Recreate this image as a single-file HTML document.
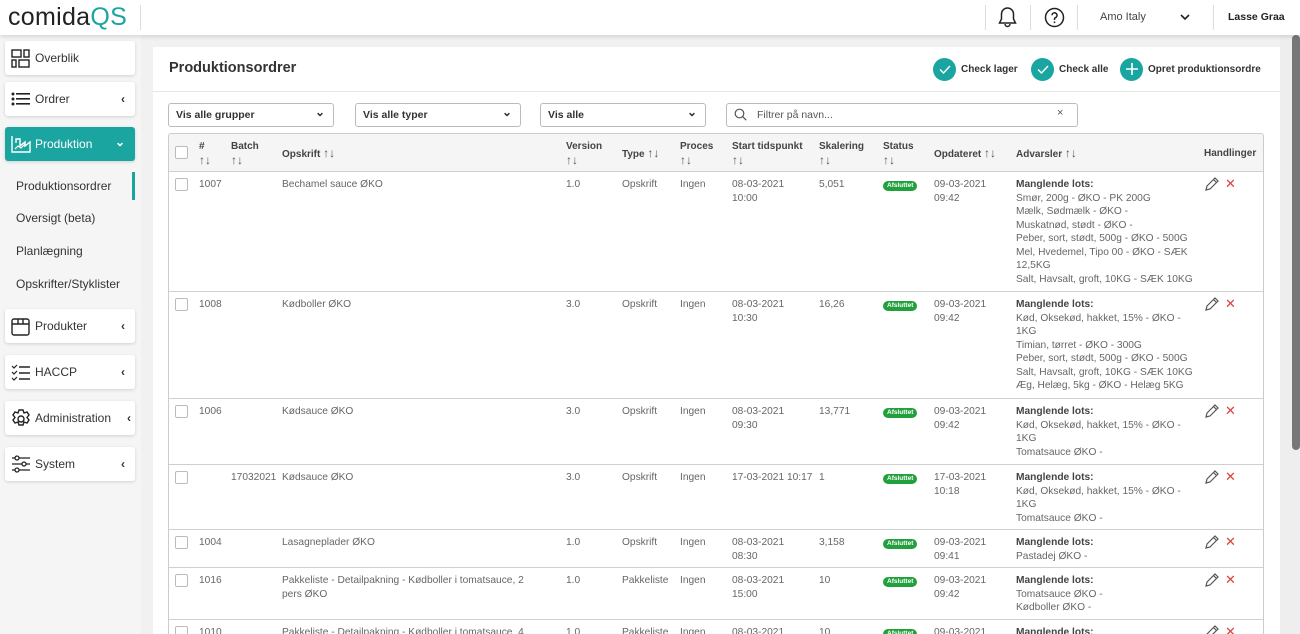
<!DOCTYPE html>
<html style="overflow:hidden;width:1300px;height:634px"><head><meta charset="utf-8"><style>
*{box-sizing:border-box;margin:0;padding:0}
body{width:1300px;height:634px;overflow:hidden;font-family:"Liberation Sans",Arial,sans-serif;background:#f1f1f1;position:relative;color:#333}
.abs{position:absolute}
#hdr{left:0;top:0;width:1300px;height:35px;background:#fff;box-shadow:0 2px 4px rgba(0,0,0,.12);z-index:5}
.logo{left:8px;top:3px;font-size:25px;color:#222;letter-spacing:.3px}
.logo span{color:#1aa5a0}
.sep{top:5px;width:1px;height:25px;background:#ddd}
#side{left:0;top:35px;width:141px;height:599px;background:#f5f5f5}
.nav{position:absolute;left:5px;width:130px;height:34px;background:#fff;border-radius:3px;box-shadow:0 1px 3px rgba(0,0,0,.15);font-size:12px;color:#333}
.nav .ic{position:absolute;left:6px;top:8px}
.nav .t{position:absolute;left:30px;top:10px}
.nav .ch{position:absolute;right:10px;top:10px;font-size:12px;font-weight:bold;line-height:14px}
.sub{position:absolute;left:16px;font-size:12px;color:#333}
#card{left:153px;top:47px;width:1127px;height:587px;background:#fff;overflow:hidden}
.title{left:16px;top:13px;font-size:14.5px;font-weight:bold;color:#333}
.btn{top:10px;height:24px;font-size:10px;font-weight:bold;color:#333;display:flex;align-items:center;gap:5px}
.circ{width:23px;height:23px;border-radius:50%;background:#1aa5a0;display:flex;align-items:center;justify-content:center}
.sel{top:56px;height:24px;border:1px solid #bbb;border-radius:3px;font-size:10.5px;font-weight:bold;padding:5px 7px;color:#333}
.sel:after{content:"⌄";position:absolute;right:8px;top:1px;font-size:12px}
#tbl{left:168px;top:133px;width:1096px;height:510px;border:1px solid #ccc;border-radius:3px;overflow:hidden}
.row{position:absolute;left:0;width:1094px;border-bottom:1px solid #cfcfcf;font-size:10.2px;color:#666;line-height:13.5px}
.row div{position:absolute}
.hd{background:#f5f5f5;font-weight:bold;color:#444;font-size:10px}
.ar{font-size:12px;font-weight:normal;color:#555}
.cb{width:13px;height:13px;border:1px solid #bbb;border-radius:2px;background:#fff}
.badge{background:#22a03c;color:#fff;font-size:6.5px;font-weight:bold;border-radius:6px;padding:0 4px;line-height:10px}
.adv b{color:#444}
.x{color:#d9413c;font-size:13px}
#sb{left:1280px;top:35px;width:20px;height:599px;background:#eee}
#thumb{left:1292px;top:35px;width:8px;height:415px;background:#777;border-radius:4px}
</style></head><body>
<div id="hdr" class="abs">
<div class="abs logo">comida<span>QS</span></div>
<div class="abs sep" style="left:140px"></div>
<div class="abs sep" style="left:985px"></div>
<div class="abs sep" style="left:1030px"></div>
<div class="abs sep" style="left:1077px"></div>
<div class="abs sep" style="left:1213px"></div>
<svg class="abs" style="left:998px;top:6px" width="19" height="22" viewBox="0 0 19 22"><path d="M9.5 2a6 6 0 0 0-6 6v5l-2 4h16l-2-4V8a6 6 0 0 0-6-6z M7 18a2.5 2.5 0 0 0 5 0" fill="none" stroke="#222" stroke-width="1.5"/></svg>
<svg class="abs" style="left:1044px;top:7px" width="21" height="21" viewBox="0 0 21 21"><circle cx="10.5" cy="10.5" r="9" fill="none" stroke="#222" stroke-width="1.5"/><path d="M8 8.3a2.5 2.5 0 1 1 3.5 2.3c-.8.4-1 .9-1 1.7v.7" fill="none" stroke="#222" stroke-width="1.5"/><circle cx="10.5" cy="15.3" r=".9" fill="#222"/></svg>
<div class="abs" style="left:1100px;top:11px;font-size:11px;color:#444">Amo Italy</div>
<svg class="abs" style="left:1180px;top:14px" width="10" height="7"><path d="M1 1l4 4 4-4" fill="none" stroke="#222" stroke-width="1.6"/></svg>
<div class="abs" style="left:1228px;top:11px;font-size:10.5px;font-weight:bold;color:#222">Lasse Graa</div>
</div>

<div id="side" class="abs">
<div class="nav" style="top:6px"><svg class="ic" width="20" height="19"><rect x="1" y="1" width="9" height="7" fill="none" stroke="#222" stroke-width="1.4"/><rect x="13" y="1" width="5" height="7" fill="none" stroke="#222" stroke-width="1.4"/><rect x="1" y="11" width="4" height="7" fill="none" stroke="#222" stroke-width="1.4"/><rect x="8" y="11" width="10" height="7" fill="none" stroke="#222" stroke-width="1.4"/></svg><span class="t">Overblik</span></div>
<div class="nav" style="top:47px"><svg class="ic" width="20" height="18"><g fill="#222"><circle cx="2" cy="4" r="1.5"/><circle cx="2" cy="9" r="1.5"/><circle cx="2" cy="14" r="1.5"/><rect x="5" y="3" width="14" height="1.6"/><rect x="5" y="8" width="14" height="1.6"/><rect x="5" y="13" width="14" height="1.6"/></g></svg><span class="t">Ordrer</span><span class="ch">‹</span></div>
<div class="nav" style="top:92px;background:#1aa5a0;color:#fff"><svg class="ic" width="20" height="18"><path d="M1 1v16h18V7l-5 4V7l-5 4V4H5v4" fill="none" stroke="#fff" stroke-width="1.4"/><path d="M4 14l3-3 3 2 4-4" fill="none" stroke="#fff" stroke-width="1.2"/></svg><span class="t">Produktion</span><span class="ch" style="top:8px">⌄</span></div>
<div class="sub" style="top:144px">Produktionsordrer</div>
<div class="abs" style="left:132px;top:137px;width:3px;height:28px;background:#1aa5a0"></div>
<div class="sub" style="top:176px">Oversigt (beta)</div>
<div class="sub" style="top:209px">Planlægning</div>
<div class="sub" style="top:242px">Opskrifter/Styklister</div>
<div class="nav" style="top:274px"><svg class="ic" width="20" height="19"><rect x="1" y="2" width="17" height="16" rx="2" fill="none" stroke="#222" stroke-width="1.4"/><path d="M1 7h17M7 2v5h5V2" fill="none" stroke="#222" stroke-width="1.4"/></svg><span class="t">Produkter</span><span class="ch">‹</span></div>
<div class="nav" style="top:320px"><svg class="ic" width="20" height="18"><path d="M1 3l2 2 3-3M1 9l2 2 3-3M1 15l2 2 3-3" fill="none" stroke="#222" stroke-width="1.2"/><path d="M8 4h11M8 10h11M8 16h11" stroke="#222" stroke-width="1.4"/></svg><span class="t">HACCP</span><span class="ch">‹</span></div>
<div class="nav" style="top:366px"><svg class="ic" width="20" height="20"><circle cx="10" cy="10" r="3" fill="none" stroke="#222" stroke-width="1.4"/><path d="M8 1h4l1 3 3-1 2 3-2 2.5 2 2.5-2 3-3-1-1 3H8l-1-3-3 1-2-3 2-2.5L2 6l2-3 3 1z" fill="none" stroke="#222" stroke-width="1.4"/></svg><span class="t">Administration</span><span class="ch" style="right:4px">‹</span></div>
<div class="nav" style="top:412px"><svg class="ic" width="20" height="19"><path d="M1 3h18M1 9h18M1 15h18" stroke="#222" stroke-width="1.3"/><circle cx="6" cy="3" r="2" fill="#fff" stroke="#222" stroke-width="1.3"/><circle cx="13" cy="9" r="2" fill="#fff" stroke="#222" stroke-width="1.3"/><circle cx="6" cy="15" r="2" fill="#fff" stroke="#222" stroke-width="1.3"/></svg><span class="t">System</span><span class="ch">‹</span></div>
</div>

<div id="card" class="abs">
<div class="abs title">Produktionsordrer</div>
<div class="abs btn" style="left:780px"><div class="circ"><svg width="12" height="9"><path d="M1 4.5l3.5 3.5L11 1" fill="none" stroke="#fff" stroke-width="1.4"/></svg></div>Check lager</div>
<div class="abs btn" style="left:878px"><div class="circ"><svg width="12" height="9"><path d="M1 4.5l3.5 3.5L11 1" fill="none" stroke="#fff" stroke-width="1.4"/></svg></div>Check alle</div>
<div class="abs btn" style="left:967px"><div class="circ"><svg width="12" height="12"><path d="M6 0v12M0 6h12" stroke="#fff" stroke-width="1.6"/></svg></div>Opret produktionsordre</div>
<div class="abs" style="left:0;top:44px;width:1127px;height:1px;background:#e6e6e6"></div>
<div class="abs sel" style="left:15px;width:166px">Vis alle grupper</div>
<div class="abs sel" style="left:202px;width:166px">Vis alle typer</div>
<div class="abs sel" style="left:387px;width:166px">Vis alle</div>
<div class="abs sel" style="left:573px;width:352px;font-weight:normal;color:#555;padding-left:30px">Filtrer på navn...</div>
<svg class="abs" style="left:581px;top:61px" width="13" height="13"><circle cx="5.5" cy="5.5" r="4.3" fill="none" stroke="#555" stroke-width="1.2"/><path d="M8.7 8.7l3.5 3.5" stroke="#555" stroke-width="1.2"/></svg>
<div class="abs" style="left:904px;top:60px;width:12px;height:14px;font-size:11px;color:#555;background:#fff">×</div>
</div>

<div id="tbl" class="abs">
<div class="row hd" style="top:0;height:38px">
<div class="cb" style="left:6px;top:12px"></div>
<div style="left:30px;top:6px">#<br><span class="ar">↑↓</span></div>
<div style="left:62px;top:6px">Batch<br><span class="ar">↑↓</span></div>
<div style="left:113px;top:13px">Opskrift <span class="ar">↑↓</span></div>
<div style="left:397px;top:6px">Version<br><span class="ar">↑↓</span></div>
<div style="left:453px;top:13px">Type <span class="ar">↑↓</span></div>
<div style="left:511px;top:6px">Proces<br><span class="ar">↑↓</span></div>
<div style="left:563px;top:6px">Start tidspunkt<br><span class="ar">↑↓</span></div>
<div style="left:650px;top:6px">Skalering<br><span class="ar">↑↓</span></div>
<div style="left:714px;top:6px">Status<br><span class="ar">↑↓</span></div>
<div style="left:765px;top:13px">Opdateret <span class="ar">↑↓</span></div>
<div style="left:847px;top:13px">Advarsler <span class="ar">↑↓</span></div>
<div style="left:1035px;top:13px">Handlinger</div>
</div>

<div class="row" style="top:38px;height:120px">
<div class="cb" style="left:6px;top:6px"></div><div style="left:30px;top:6px">1007</div><div style="left:113px;top:6px">Bechamel sauce ØKO</div><div style="left:397px;top:6px">1.0</div><div style="left:453px;top:6px">Opskrift</div><div style="left:511px;top:6px">Ingen</div><div style="left:563px;top:6px">08-03-2021<br>10:00</div><div style="left:650px;top:6px">5,051</div><div class="badge" style="left:714px;top:9px">Afsluttet</div><div style="left:765px;top:6px">09-03-2021<br>09:42</div>
<div class="adv" style="left:847px;top:6px"><b>Manglende lots:</b><br>Smør, 200g - ØKO - PK 200G<br>Mælk, Sødmælk - ØKO -<br>Muskatnød, stødt - ØKO -<br>Peber, sort, stødt, 500g - ØKO - 500G<br>Mel, Hvedemel, Tipo 00 - ØKO - SÆK<br>12,5KG<br>Salt, Havsalt, groft, 10KG - SÆK 10KG</div>
<div style="left:1034px;top:5px"><svg width="16" height="16"><path d="M3 13l1-4 8-8 3 3-8 8z M10.5 2.5l3 3" fill="none" stroke="#555" stroke-width="1.2"/></svg></div><div class="x" style="left:1056px;top:5px">✕</div>
</div>

<div class="row" style="top:158px;height:107px">
<div class="cb" style="left:6px;top:6px"></div><div style="left:30px;top:6px">1008</div><div style="left:113px;top:6px">Kødboller ØKO</div><div style="left:397px;top:6px">3.0</div><div style="left:453px;top:6px">Opskrift</div><div style="left:511px;top:6px">Ingen</div><div style="left:563px;top:6px">08-03-2021<br>10:30</div><div style="left:650px;top:6px">16,26</div><div class="badge" style="left:714px;top:9px">Afsluttet</div><div style="left:765px;top:6px">09-03-2021<br>09:42</div>
<div class="adv" style="left:847px;top:6px"><b>Manglende lots:</b><br>Kød, Oksekød, hakket, 15% - ØKO -<br>1KG<br>Timian, tørret - ØKO - 300G<br>Peber, sort, stødt, 500g - ØKO - 500G<br>Salt, Havsalt, groft, 10KG - SÆK 10KG<br>Æg, Helæg, 5kg - ØKO - Helæg 5KG</div>
<div style="left:1034px;top:5px"><svg width="16" height="16"><path d="M3 13l1-4 8-8 3 3-8 8z M10.5 2.5l3 3" fill="none" stroke="#555" stroke-width="1.2"/></svg></div><div class="x" style="left:1056px;top:5px">✕</div>
</div>

<div class="row" style="top:265px;height:66px">
<div class="cb" style="left:6px;top:6px"></div><div style="left:30px;top:6px">1006</div><div style="left:113px;top:6px">Kødsauce ØKO</div><div style="left:397px;top:6px">3.0</div><div style="left:453px;top:6px">Opskrift</div><div style="left:511px;top:6px">Ingen</div><div style="left:563px;top:6px">08-03-2021<br>09:30</div><div style="left:650px;top:6px">13,771</div><div class="badge" style="left:714px;top:9px">Afsluttet</div><div style="left:765px;top:6px">09-03-2021<br>09:42</div>
<div class="adv" style="left:847px;top:6px"><b>Manglende lots:</b><br>Kød, Oksekød, hakket, 15% - ØKO -<br>1KG<br>Tomatsauce ØKO -</div>
<div style="left:1034px;top:5px"><svg width="16" height="16"><path d="M3 13l1-4 8-8 3 3-8 8z M10.5 2.5l3 3" fill="none" stroke="#555" stroke-width="1.2"/></svg></div><div class="x" style="left:1056px;top:5px">✕</div>
</div>

<div class="row" style="top:331px;height:65px">
<div class="cb" style="left:6px;top:6px"></div><div style="left:62px;top:6px">17032021</div><div style="left:113px;top:6px">Kødsauce ØKO</div><div style="left:397px;top:6px">3.0</div><div style="left:453px;top:6px">Opskrift</div><div style="left:511px;top:6px">Ingen</div><div style="left:563px;top:6px">17-03-2021 10:17</div><div style="left:650px;top:6px">1</div><div class="badge" style="left:714px;top:9px">Afsluttet</div><div style="left:765px;top:6px">17-03-2021<br>10:18</div>
<div class="adv" style="left:847px;top:6px"><b>Manglende lots:</b><br>Kød, Oksekød, hakket, 15% - ØKO -<br>1KG<br>Tomatsauce ØKO -</div>
<div style="left:1034px;top:5px"><svg width="16" height="16"><path d="M3 13l1-4 8-8 3 3-8 8z M10.5 2.5l3 3" fill="none" stroke="#555" stroke-width="1.2"/></svg></div><div class="x" style="left:1056px;top:5px">✕</div>
</div>

<div class="row" style="top:396px;height:38px">
<div class="cb" style="left:6px;top:6px"></div><div style="left:30px;top:6px">1004</div><div style="left:113px;top:6px">Lasagneplader ØKO</div><div style="left:397px;top:6px">1.0</div><div style="left:453px;top:6px">Opskrift</div><div style="left:511px;top:6px">Ingen</div><div style="left:563px;top:6px">08-03-2021<br>08:30</div><div style="left:650px;top:6px">3,158</div><div class="badge" style="left:714px;top:9px">Afsluttet</div><div style="left:765px;top:6px">09-03-2021<br>09:41</div>
<div class="adv" style="left:847px;top:6px"><b>Manglende lots:</b><br>Pastadej ØKO -</div>
<div style="left:1034px;top:5px"><svg width="16" height="16"><path d="M3 13l1-4 8-8 3 3-8 8z M10.5 2.5l3 3" fill="none" stroke="#555" stroke-width="1.2"/></svg></div><div class="x" style="left:1056px;top:5px">✕</div>
</div>

<div class="row" style="top:434px;height:52px">
<div class="cb" style="left:6px;top:6px"></div><div style="left:30px;top:6px">1016</div><div style="left:113px;top:6px">Pakkeliste - Detailpakning - Kødboller i tomatsauce, 2<br>pers ØKO</div><div style="left:397px;top:6px">1.0</div><div style="left:453px;top:6px">Pakkeliste</div><div style="left:511px;top:6px">Ingen</div><div style="left:563px;top:6px">08-03-2021<br>15:00</div><div style="left:650px;top:6px">10</div><div class="badge" style="left:714px;top:9px">Afsluttet</div><div style="left:765px;top:6px">09-03-2021<br>09:42</div>
<div class="adv" style="left:847px;top:6px"><b>Manglende lots:</b><br>Tomatsauce ØKO -<br>Kødboller ØKO -</div>
<div style="left:1034px;top:5px"><svg width="16" height="16"><path d="M3 13l1-4 8-8 3 3-8 8z M10.5 2.5l3 3" fill="none" stroke="#555" stroke-width="1.2"/></svg></div><div class="x" style="left:1056px;top:5px">✕</div>
</div>

<div class="row" style="top:486px;height:40px;border:none">
<div class="cb" style="left:6px;top:6px"></div><div style="left:30px;top:6px">1010</div><div style="left:113px;top:6px">Pakkeliste - Detailpakning - Kødboller i tomatsauce, 4</div><div style="left:397px;top:6px">1.0</div><div style="left:453px;top:6px">Pakkeliste</div><div style="left:511px;top:6px">Ingen</div><div style="left:563px;top:6px">08-03-2021</div><div style="left:650px;top:6px">10</div><div class="badge" style="left:714px;top:9px">Afsluttet</div><div style="left:765px;top:6px">09-03-2021</div>
<div class="adv" style="left:847px;top:6px"><b>Manglende lots:</b></div>
<div style="left:1034px;top:5px"><svg width="16" height="16"><path d="M3 13l1-4 8-8 3 3-8 8z M10.5 2.5l3 3" fill="none" stroke="#555" stroke-width="1.2"/></svg></div><div class="x" style="left:1056px;top:5px">✕</div>
</div>
</div>

<div id="sb" class="abs"></div>
<div id="thumb" class="abs"></div>
</body></html>
